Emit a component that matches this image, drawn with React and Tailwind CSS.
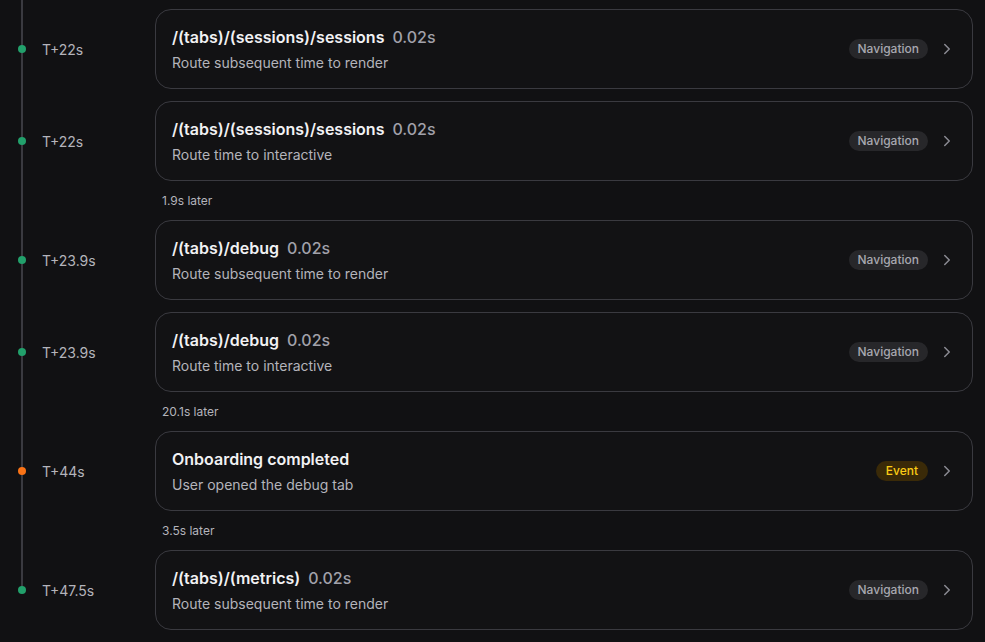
import React from "react";

const items = [
  { t: "T+22s", title: "/(tabs)/(sessions)/sessions", dur: "0.02s", sub: "Route subsequent time to render", kind: "nav" },
  { t: "T+22s", title: "/(tabs)/(sessions)/sessions", dur: "0.02s", sub: "Route time to interactive", kind: "nav" },
  { later: "1.9s later" },
  { t: "T+23.9s", title: "/(tabs)/debug", dur: "0.02s", sub: "Route subsequent time to render", kind: "nav" },
  { t: "T+23.9s", title: "/(tabs)/debug", dur: "0.02s", sub: "Route time to interactive", kind: "nav" },
  { later: "20.1s later" },
  { t: "T+44s", title: "Onboarding completed", sub: "User opened the debug tab", kind: "event" },
  { later: "3.5s later" },
  { t: "T+47.5s", title: "/(tabs)/(metrics)", dur: "0.02s", sub: "Route subsequent time to render", kind: "nav" },
];

function Chevron() {
  return (
    <svg width="18" height="18" viewBox="0 0 24 24" fill="none" stroke="#8b8b93" strokeWidth="2" strokeLinecap="round" strokeLinejoin="round">
      <path d="m9 18 6-6-6-6" />
    </svg>
  );
}

export default function App() {
  return (
    <div className="min-h-[642px] w-full bg-[#111113] font-['Inter',sans-serif] text-white">
      <div className="relative pt-[3px]">
        <div className="absolute left-[21px] top-0 h-[590px] w-[2px] bg-[#3a3a40]" />
        {items.map((it, i) =>
          it.later ? (
            <div key={i} className="flex h-[27px] items-center pl-[162px] text-[12px] text-[#b4b4bb]">
              {it.later}
            </div>
          ) : (
            <div key={i} className="flex items-center py-1.5 pr-3">
              <div className="relative flex w-[155px] shrink-0 items-center">
                <div className={`ml-[18px] h-2 w-2 rounded-full ${it.kind === "event" ? "bg-[#f97316]" : "bg-[#22a06b]"}`} />
                <div className="ml-4 text-[14px] text-[#b4b4bb]">{it.t}</div>
              </div>
              <div className="flex h-[80px] flex-1 items-center rounded-2xl border border-[#3a3a40] bg-[#121214] pl-4 pr-4">
                <div className="mb-[1px] flex flex-1 flex-col gap-[4px]">
                  <div className="flex items-baseline gap-2 text-[16px] leading-6">
                    <span className="font-semibold text-[#f1f1f3]">{it.title}</span>
                    {it.dur && <span className="font-medium text-[#a1a1aa]">{it.dur}</span>}
                  </div>
                  <div className="text-[14px] leading-5 text-[#b4b4bb]">{it.sub}</div>
                </div>
                {it.kind === "event" ? (
                  <span className="mr-[10px] rounded-full bg-[#3a2a08] px-[10px] py-[2px] text-[12px] leading-4 font-medium text-[#facc15]">Event</span>
                ) : (
                  <span className="mr-[10px] rounded-full bg-[#27272a] px-[9px] py-[2px] text-[12px] leading-4 font-medium text-[#a8a8b0]">Navigation</span>
                )}
                <Chevron />
              </div>
            </div>
          )
        )}
      </div>
    </div>
  );
}
